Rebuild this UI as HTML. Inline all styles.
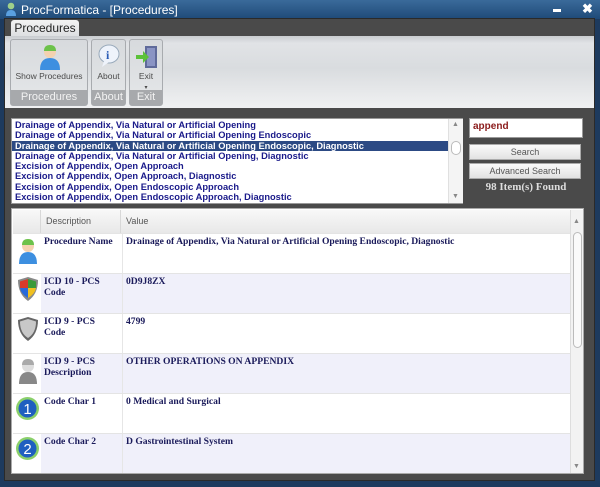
<!DOCTYPE html>
<html><head><meta charset="utf-8"><style>
*{margin:0;padding:0;box-sizing:border-box}
body{width:600px;height:487px;overflow:hidden;background:#1d3a5e;font-family:"Liberation Sans",sans-serif;position:relative}
.abs{position:absolute}
#title{left:0;top:0;width:600px;height:19px;background:linear-gradient(#3a6a9a,#1f4a78);color:#fff;font-size:12px}
#inner{left:4px;top:18px;width:591px;height:463px;background:#4a4a4a;border:1px solid #2a2a2a}
#ribbon{left:5px;top:36px;width:589px;height:72px;background:linear-gradient(#c9ccd0 0,#e1e3e6 10%,#d9dcdf 45%,#f0f1f2 100%)}
.grp{position:absolute;top:39px;height:67px;border:1px solid #a8abaf;border-radius:3px;background:linear-gradient(#d7dadd,#e5e7e9)}
.grp .lbl{position:absolute;left:0;right:0;bottom:0;height:15px;background:#a7a9ac;color:#f2f2f2;font-size:11px;text-align:center;line-height:15px}
.grp .t{position:absolute;left:0;right:0;top:31px;font-size:8.5px;color:#4b4b4b;text-align:center}
#tab{left:11px;top:20px;width:68px;height:17px;background:linear-gradient(#f3f3f3,#dcdee0);border-radius:3px 3px 0 0;color:#222;font-size:12px;line-height:17px;text-align:center}
#list{left:11px;top:118px;width:452px;height:86px;background:#fff;border:1px solid #999}
.li{height:10.3px;font-size:9.3px;font-weight:bold;color:#1a1a8a;line-height:10.3px;padding-left:3px;white-space:nowrap;overflow:hidden;width:436px}
.li.sel{background:#2c4a84;color:#fff}
.btn{background:linear-gradient(#fafafa,#e2e2e2);border:1px solid #aaa;color:#555;font-size:9px;text-align:center}
#grid{left:11px;top:208px;width:573px;height:266px;background:#fff;border:1px solid #aaa;overflow:hidden}
.hdr{position:absolute;top:1px;height:23px;background:linear-gradient(#f8f8f8,#e8e8e8);border-right:1px solid #d8d8d8;font-size:9px;color:#555;line-height:23px;padding-left:5px}
.row{position:absolute;left:1px;width:557px;height:40px;border-top:1px solid #e4e4e4}
.row .ic{position:absolute;left:0;top:0;width:28px;height:39px;background:#fff}
.row .d{position:absolute;left:31px;top:3px;width:78px;font-family:"Liberation Serif",serif;font-weight:bold;font-size:9.6px;color:#1a1a5a;line-height:10.5px}
.row .v{position:absolute;left:109px;top:0;height:39px;border-left:1px solid #e6e6e6;padding:3px 0 0 3px;font-family:"Liberation Serif",serif;font-weight:bold;font-size:9.6px;color:#1a1a5a;width:448px;line-height:10.5px}
</style></head><body>
<div id="title" class="abs">
<svg class="abs" style="left:5px;top:2px" width="12" height="15"><circle cx="6" cy="4" r="3.3" fill="#9fd08a"/><path d="M1 14 Q1 8 6 8 Q11 8 11 14Z" fill="#5aa0e0"/></svg>
<span class="abs" style="left:21px;top:3px">ProcFormatica - [Procedures]</span>
<div class="abs" style="left:553px;top:9px;width:8px;height:3px;background:#fff"></div>
<span class="abs" style="left:582px;top:1px;font-size:13px;font-weight:bold">✖</span>
</div>
<div id="inner" class="abs"></div>
<div id="tab" class="abs">Procedures</div>
<div id="ribbon" class="abs"></div>
<div class="grp" style="left:10px;width:78px">
<svg class="abs" style="left:28px;top:4px" width="22" height="26"><circle cx="11" cy="8" r="6" fill="#f4d2b0"/><path d="M5 7 Q5 1 11 1 Q17 1 17 7Z" fill="#6cc24a"/><path d="M1 26 Q1 14 11 14 Q21 14 21 26Z" fill="#3d8fe0"/></svg>
<div class="t">Show Procedures</div><div class="lbl">Procedures</div></div>
<div class="grp" style="left:91px;width:35px">
<svg class="abs" style="left:6px;top:4px" width="22" height="24"><ellipse cx="11" cy="10" rx="10" ry="9" fill="#eef3fb" stroke="#9ab" /><path d="M6 17 L4 23 L11 18Z" fill="#eef3fb"/><text x="8" y="15" font-size="12" font-weight="bold" fill="#2a5cb5" font-family="Liberation Serif">i</text></svg>
<div class="t">About</div><div class="lbl">About</div></div>
<div class="grp" style="left:129px;width:34px">
<svg class="abs" style="left:5px;top:5px" width="24" height="24"><rect x="10" y="1" width="12" height="22" fill="#5f6a9a"/><rect x="12" y="3" width="8" height="18" fill="#8a94c4"/><path d="M1 10 H8 V6 L14 12 L8 18 V14 H1Z" fill="#5cc23a"/></svg>
<div class="t">Exit<br><span style="font-size:6px">▾</span></div><div class="lbl">Exit</div></div>
<div id="list" class="abs">
<div style="padding-top:1px">
<div class="li">Drainage of Appendix, Via Natural or Artificial Opening</div>
<div class="li">Drainage of Appendix, Via Natural or Artificial Opening Endoscopic</div>
<div class="li sel">Drainage of Appendix, Via Natural or Artificial Opening Endoscopic, Diagnostic</div>
<div class="li">Drainage of Appendix, Via Natural or Artificial Opening, Diagnostic</div>
<div class="li">Excision of Appendix, Open Approach</div>
<div class="li">Excision of Appendix, Open Approach, Diagnostic</div>
<div class="li">Excision of Appendix, Open Endoscopic Approach</div>
<div class="li">Excision of Appendix, Open Endoscopic Approach, Diagnostic</div>
</div>
<div class="abs" style="left:436px;top:0;width:15px;height:84px;background:#f4f4f4;border-left:1px solid #e0e0e0"></div>
<div class="abs" style="left:439px;top:22px;width:10px;height:14px;border:1px solid #bbb;border-radius:5px;background:#fff"></div>
<span class="abs" style="left:440px;top:2px;font-size:7px;color:#888">▲</span>
<span class="abs" style="left:440px;top:74px;font-size:7px;color:#888">▼</span>
</div>
<div class="abs" style="left:469px;top:118px;width:114px;height:20px;background:#fff;border:1px solid #999;font-size:10px;font-weight:bold;color:#8a1a1a;padding:2px 0 0 3px">append</div>
<div class="abs btn" style="left:469px;top:144px;width:112px;height:16px;line-height:15px">Search</div>
<div class="abs btn" style="left:469px;top:163px;width:112px;height:16px;line-height:15px">Advanced Search</div>
<div class="abs" style="left:469px;top:181px;width:114px;text-align:center;font-family:'Liberation Serif',serif;font-weight:bold;font-size:11px;color:#ddd">98 Item(s) Found</div>
<div id="grid" class="abs">
<div class="hdr" style="left:1px;width:28px"></div>
<div class="hdr" style="left:29px;width:80px">Description</div>
<div class="hdr" style="left:109px;width:450px">Value</div>
<div class="row" style="top:24px;background:#fff"><div class="ic"><svg style="position:absolute;left:5px;top:4px" width="20" height="26"><circle cx="10" cy="8" r="6" fill="#f4d2b0"/><path d="M4 7 Q4 1 10 1 Q16 1 16 7Z" fill="#6cc24a"/><path d="M1 26 Q1 14 10 14 Q19 14 19 26Z" fill="#3d8fe0"/></svg></div><div class="d">Procedure Name</div><div class="v">Drainage of Appendix, Via Natural or Artificial Opening Endoscopic, Diagnostic</div></div>
<div class="row" style="top:64px;background:#f0f0fa"><div class="ic"><svg style="position:absolute;left:4px;top:2px" width="22" height="26"><path d="M11 1 L21 4 Q21 18 11 25 Q1 18 1 4Z" fill="#888"/><path d="M11 3 L19 5.5 V12 H11Z" fill="#3a9a3a"/><path d="M11 3 L3 5.5 V12 H11Z" fill="#d83a2a"/><path d="M3 12 H11 V22 Q4 18 3 12Z" fill="#2a6ad8"/><path d="M19 12 H11 V22 Q18 18 19 12Z" fill="#f0c020"/></svg></div><div class="d">ICD 10 - PCS<br>Code</div><div class="v">0D9J8ZX</div></div>
<div class="row" style="top:104px;background:#fff"><div class="ic"><svg style="position:absolute;left:4px;top:2px" width="22" height="26"><path d="M11 1 L21 4 Q21 18 11 25 Q1 18 1 4Z" fill="#666"/><path d="M11 3 L19 5.5 Q19 17 11 22 Q3 17 3 5.5Z" fill="#c8c8c8"/></svg></div><div class="d">ICD 9 - PCS<br>Code</div><div class="v">4799</div></div>
<div class="row" style="top:144px;background:#f0f0fa"><div class="ic"><svg style="position:absolute;left:5px;top:4px" width="20" height="26"><circle cx="10" cy="8" r="6" fill="#ddd"/><path d="M4 7 Q4 1 10 1 Q16 1 16 7Z" fill="#aaa"/><path d="M1 26 Q1 14 10 14 Q19 14 19 26Z" fill="#888"/></svg></div><div class="d">ICD 9 - PCS<br>Description</div><div class="v">OTHER OPERATIONS ON APPENDIX</div></div>
<div class="row" style="top:184px;background:#fff"><div class="ic"><svg style="position:absolute;left:2px;top:2px" width="25" height="25"><circle cx="12.5" cy="12.5" r="11.5" fill="#8bd06a"/><circle cx="12.5" cy="12.5" r="9" fill="#1f5fc0"/><text x="12.5" y="18" text-anchor="middle" font-size="15" fill="#fff" font-family="Liberation Sans">1</text></svg></div><div class="d">Code Char 1</div><div class="v">0 Medical and Surgical</div></div>
<div class="row" style="top:224px;background:#f0f0fa"><div class="ic"><svg style="position:absolute;left:2px;top:2px" width="25" height="25"><circle cx="12.5" cy="12.5" r="11.5" fill="#8bd06a"/><circle cx="12.5" cy="12.5" r="9" fill="#1f5fc0"/><text x="12.5" y="18" text-anchor="middle" font-size="15" fill="#fff" font-family="Liberation Sans">2</text></svg></div><div class="d">Code Char 2</div><div class="v">D Gastrointestinal System</div></div>
<div class="abs" style="left:558px;top:1px;width:14px;height:264px;background:#f2f2f2;border-left:1px solid #ddd"></div>
<div class="abs" style="left:561px;top:23px;width:9px;height:116px;border:1px solid #bbb;border-radius:5px;background:#fafafa"></div>
<span class="abs" style="left:561px;top:9px;font-size:7px;color:#888">▲</span>
<span class="abs" style="left:561px;top:254px;font-size:7px;color:#888">▼</span>
</div>
</body></html>
